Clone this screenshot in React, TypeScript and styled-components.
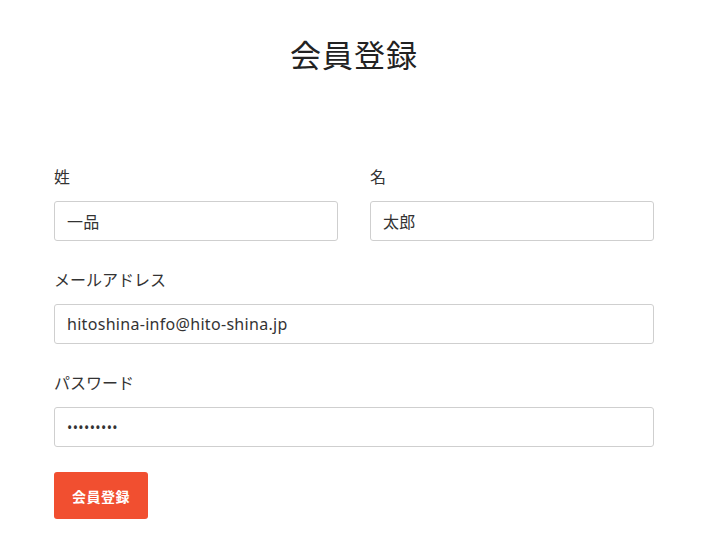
import React from "react";
import styled, { createGlobalStyle } from "styled-components";

const GlobalStyle = createGlobalStyle`
  body {
    margin: 0;
    background: #ffffff;
    font-family: "Noto Sans", "Noto Sans CJK JP", sans-serif;
    color: #333333;
  }
`;

const App: React.FC = () => {
  return (
    <React.Fragment>
      <GlobalStyle />
      <Page>
        <Title>会員登録</Title>
        <Form onSubmit={(e) => e.preventDefault()}>
          <Row>
            <Field>
              <Label>姓</Label>
              <Input type="text" defaultValue="一品" readOnly />
            </Field>
            <Field>
              <Label>名</Label>
              <Input type="text" defaultValue="太郎" readOnly />
            </Field>
          </Row>
          <Field>
            <Label>メールアドレス</Label>
            <Input
              type="email"
              defaultValue="hitoshina-info@hito-shina.jp"
              readOnly
            />
          </Field>
          <Field $last>
            <Label>パスワード</Label>
            <PasswordInput type="password" defaultValue="password1" readOnly />
          </Field>
          <SubmitButton type="submit">会員登録</SubmitButton>
        </Form>
      </Page>
    </React.Fragment>
  );
};

const Page = styled.div`
  width: 600px;
  margin: 0 auto;
  padding: 32px 0 30px;
`;

const Title = styled.h1`
  margin: 0 0 89px;
  text-align: center;
  font-family: "Noto Sans CJK JP", serif;
  font-size: 31px;
  font-weight: 400;
  line-height: 44px;
  color: #222222;
  letter-spacing: 1px;
`;

const Form = styled.form`
  display: flex;
  flex-direction: column;
`;

const Row = styled.div`
  display: grid;
  grid-template-columns: 1fr 1fr;
  column-gap: 32px;
`;

const Field = styled.div<{ $last?: boolean }>`
  display: flex;
  flex-direction: column;
  margin-bottom: ${(props) => (props.$last ? "25px" : "27px")};
`;

const Label = styled.label`
  font-size: 16px;
  line-height: 24px;
  margin-bottom: 12px;
  color: #333333;
`;

const Input = styled.input`
  box-sizing: border-box;
  width: 100%;
  height: 40px;
  padding: 0 12px;
  border: 1px solid #cfcfcf;
  border-radius: 3px;
  font-family: "Noto Sans", "Noto Sans CJK JP", sans-serif;
  font-size: 16px;
  letter-spacing: 0.3px;
  color: #333333;
  background: #ffffff;
  outline: none;
`;

const PasswordInput = styled(Input)`
  font-size: 14px;
  letter-spacing: 0.4px;
`;

const SubmitButton = styled.button`
  align-self: flex-start;
  box-sizing: border-box;
  width: 94px;
  height: 47px;
  border: none;
  border-radius: 3px;
  background: #f14f30;
  color: #ffffff;
  font-family: "Noto Sans CJK JP", sans-serif;
  font-size: 14px;
  font-weight: 700;
  letter-spacing: 0.5px;
  cursor: pointer;
`;

export default App;
